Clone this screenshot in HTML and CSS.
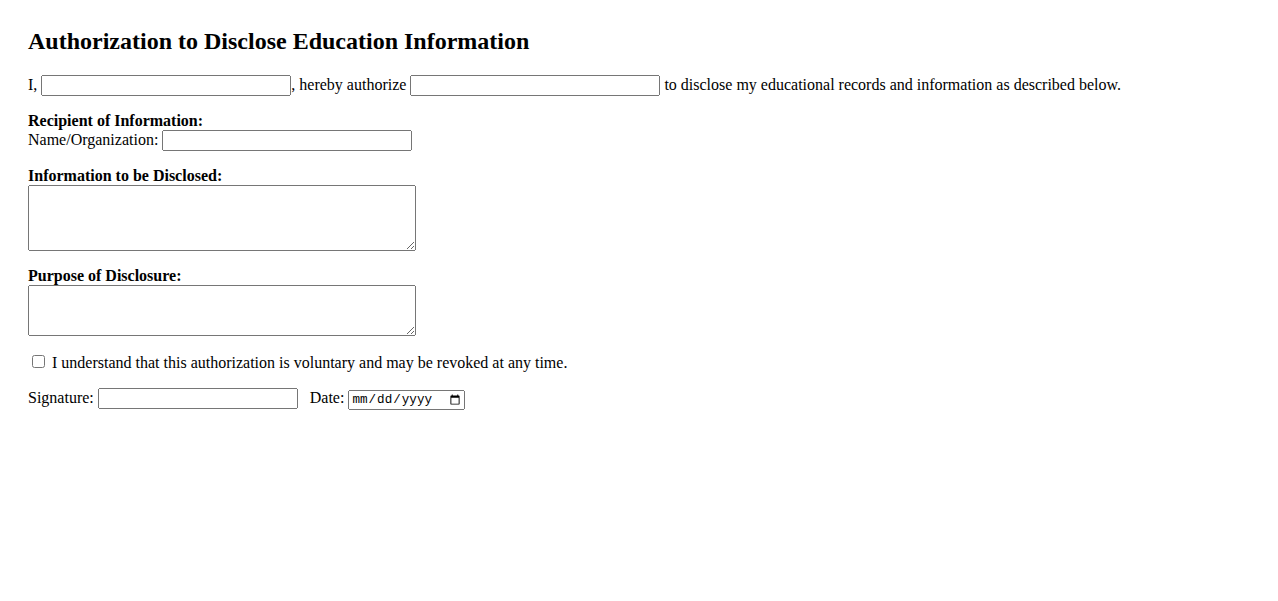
FILE: index.html
```html
<!DOCTYPE html>
<html lang="en">
<head>
<meta charset="utf-8">
<title>Authorization to Disclose Education Information</title>
<link rel="stylesheet" href="styles.css">
</head>
<body>
<div class="page">
  <h2 class="title">Authorization to Disclose Education Information</h2>
  <p class="row">I, <input type="text" class="field">, hereby authorize <input type="text" class="field"> to disclose my educational records and information as described below.</p>
  <div class="section">
    <strong>Recipient of Information:</strong><br>
    Name/Organization: <input type="text" class="field">
  </div>
  <div class="section">
    <strong>Information to be Disclosed:</strong><br>
    <textarea class="area" rows="4"></textarea>
  </div>
  <div class="section">
    <strong>Purpose of Disclosure:</strong><br>
    <textarea class="area" rows="3"></textarea>
  </div>
  <p class="row"><input type="checkbox" class="check"> I understand that this authorization is voluntary and may be revoked at any time.</p>
  <p class="row">Signature: <input type="text" class="sig"> <span class="date-label">Date:</span> <input type="date" class="date"></p>
</div>
</body>
</html>
```

FILE: styles.css
```css
html, body {
  margin: 0;
  padding: 0;
  background: #ffffff;
}

body {
  font-family: "Liberation Serif", "Times New Roman", serif;
  font-size: 16px;
  color: #000;
}

.page {
  padding: 20px 28px;
}

.title {
  font-size: 24px;
  font-weight: bold;
  margin: 8px 0 20px;
}

.row {
  margin: 16px 0;
}

.section {
  margin: 16px 0;
}

.field {
  width: 250px;
  box-sizing: border-box;
}

.sig {
  width: 200px;
  box-sizing: border-box;
}

.date-label {
  margin-left: 8px;
}

.date {
  width: 117px;
  box-sizing: border-box;
  font-family: "Liberation Mono", monospace;
  font-size: 12.6px;
}

.area {
  display: block;
  width: 388px;
  box-sizing: border-box;
}

.check {
  margin: 3px 3px 3px 4px;
}
```
